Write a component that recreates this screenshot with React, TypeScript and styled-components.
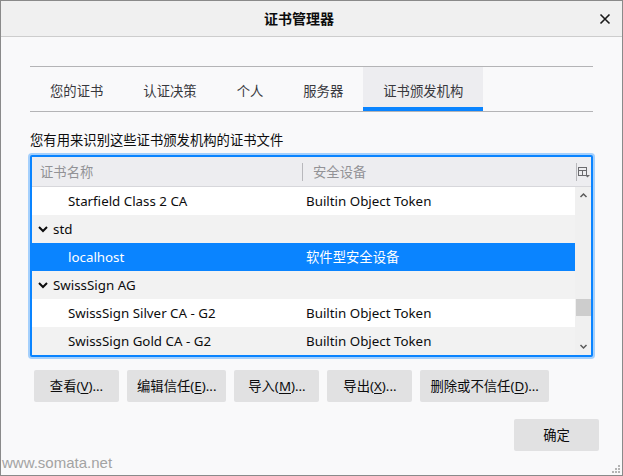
import React from "react";
import styled, { createGlobalStyle, css } from "styled-components";

const GlobalStyle = createGlobalStyle`
  html, body {
    margin: 0;
    padding: 0;
    background: #f9f9fa;
  }
  body {
    font-family: "Noto Sans", "Noto Sans CJK SC", sans-serif;
    font-size: 13.33px;
    color: #0c0c0d;
  }
  * {
    box-sizing: border-box;
  }
`;

const Window = styled.div`
  position: relative;
  width: 623px;
  height: 476px;
  border: 1px solid #8a8a8a;
  background: #f9f9fa;
  display: flex;
  flex-direction: column;
  overflow: hidden;
`;

const TitleBar = styled.div`
  flex: none;
  height: 36px;
  display: flex;
  align-items: center;
  background: #f0f0f0;
  border-bottom: 1px solid #cdcdcd;
`;

const Title = styled.div`
  flex: 1;
  padding-left: 8px;
  text-align: center;
  font-size: 14px;
  font-weight: 600;
  line-height: 20px;
  color: #0c0c0d;
`;

const CloseButton = styled.div`
  width: 32px;
  height: 35px;
  margin-right: 1px;
  display: flex;
  align-items: center;
  justify-content: center;
`;

const Content = styled.div`
  padding: 29px 29px 0 29px;
  display: flex;
  flex-direction: column;
`;

const TabStrip = styled.div`
  display: flex;
  height: 46px;
  border-top: 1px solid #b4b4b6;
  border-bottom: 1px solid #b4b4b6;
`;

const Tab = styled.div<{ $active?: boolean }>(
  (props) => css`
    height: 44px;
    padding: 3px 20px 0;
    display: flex;
    align-items: center;
    line-height: 20px;
    color: #38383d;
    ${props.$active &&
    css`
      background: #ededf0;
      box-shadow: inset 0 -4px 0 #0a84ff;
    `}
  `
);

const Caption = styled.div`
  margin-top: 18px;
  line-height: 20px;
`;

const ListBox = styled.div`
  margin-top: 5px;
  border: 2px solid #0a84ff;
  border-radius: 2px;
  box-shadow: 0 0 0 2px rgba(10, 132, 255, 0.35);
  background: #fff;
  display: flex;
  flex-direction: column;
`;

const Header = styled.div`
  height: 30px;
  display: flex;
  align-items: center;
  background: #ededf0;
  border-bottom: 1px solid #d7d7db;
  color: #929296;
`;

const HeaderCell = styled.div<{ $width?: number; $pad: number }>(
  (props) => css`
    ${props.$width ? `width: ${props.$width}px;` : "flex: 1;"}
    padding-left: ${props.$pad}px;
    line-height: 20px;
    white-space: nowrap;
  `
);

const Splitter = styled.span`
  width: 1px;
  height: 18px;
  background: #b8b8bc;
`;

const Picker = styled.div`
  width: 14px;
  display: flex;
  justify-content: center;
`;

const Body = styled.div`
  display: flex;
  height: 168px;
`;

const Rows = styled.div`
  flex: 1;
  display: flex;
  flex-direction: column;
`;

type RowKind = "plain" | "odd" | "selected";

const Row = styled.div<{ $kind: RowKind }>(
  (props) => css`
    height: 28px;
    display: flex;
    align-items: center;
    line-height: 20px;
    white-space: nowrap;
    background: ${props.$kind === "odd"
      ? "#f2f2f2"
      : props.$kind === "selected"
      ? "#0a84ff"
      : "#fff"};
    color: ${props.$kind === "selected" ? "#fff" : "#0c0c0d"};
  `
);

const NameCell = styled.div<{ $indent: number }>(
  (props) => css`
    width: 271px;
    padding-left: ${props.$indent}px;
    display: flex;
    align-items: center;
  `
);

const DeviceCell = styled.div`
  flex: 1;
  padding-left: 3px;
`;

const Twisty = styled.span`
  display: flex;
  margin-right: 4px;
`;

const Scrollbar = styled.div`
  width: 16px;
  background: #f0f0f0;
  display: flex;
  flex-direction: column;
`;

const ScrollArrow = styled.div`
  height: 17px;
  display: flex;
  align-items: center;
  justify-content: center;
`;

const Track = styled.div`
  flex: 1;
  padding-left: 1px;
`;

const Thumb = styled.div`
  height: 17px;
  background: #cdcdcd;
`;

const ButtonRow = styled.div`
  margin-top: 13px;
  padding-left: 4px;
  display: flex;
  gap: 8px;
`;

const Button = styled.button`
  height: 32px;
  min-width: 85px;
  padding: 0 10px;
  border: none;
  border-radius: 2px;
  background: #e1e1e2;
  color: #0c0c0d;
  font-family: inherit;
  font-size: 13.33px;
  line-height: 20px;
  white-space: nowrap;

  u {
    text-underline-offset: 2px;
  }
`;

const Footer = styled.div`
  padding: 17px 23px 0 0;
  display: flex;
  justify-content: flex-end;
`;

const Watermark = styled.div`
  position: absolute;
  left: 1px;
  top: 452px;
  font-family: "Liberation Sans", Arial, sans-serif;
  font-size: 15px;
  line-height: 20px;
  color: #a3a3a3;
`;

const Grip = styled.svg`
  position: absolute;
  right: 1px;
  bottom: 1px;
`;

interface Entry {
  name: string;
  device?: string;
  group?: boolean;
  selected?: boolean;
}

const entries: Entry[] = [
  { name: "Starfield Class 2 CA", device: "Builtin Object Token" },
  { name: "std", group: true },
  { name: "localhost", device: "软件型安全设备", selected: true },
  { name: "SwissSign AG", group: true },
  { name: "SwissSign Silver CA - G2", device: "Builtin Object Token" },
  { name: "SwissSign Gold CA - G2", device: "Builtin Object Token" },
];

const tabs = ["您的证书", "认证决策", "个人", "服务器", "证书颁发机构"];

const buttons: [string, string, string][] = [
  ["查看(", "V", ")..."],
  ["编辑信任(", "E", ")..."],
  ["导入(", "M", ")..."],
  ["导出(", "X", ")..."],
  ["删除或不信任(", "D", ")..."],
];

function CloseIcon() {
  return (
    <svg width="12" height="12" viewBox="0 0 12 12">
      <path
        d="M1.5 1.5 L10.5 10.5 M10.5 1.5 L1.5 10.5"
        stroke="#1a1a1a"
        strokeWidth="1.6"
        fill="none"
      />
    </svg>
  );
}

function ColumnPickerIcon() {
  return (
    <svg width="12" height="12" viewBox="0 0 12 12">
      <rect x="0.5" y="1.5" width="8" height="8" fill="none" stroke="#6a6a6e" />
      <path d="M0.5 4.5 H8.5 M4.5 4.5 V9.5" stroke="#6a6a6e" fill="none" />
      <path d="M7 9 H12 L9.5 11.5 Z" fill="#6a6a6e" />
    </svg>
  );
}

function Chevron(props: { up?: boolean; color: string; size: number; width: number }) {
  const { up, color, size, width } = props;
  const d = up ? "M2 8 L6 4 L10 8" : "M2 4 L6 8 L10 4";
  return (
    <svg width={size} height={size} viewBox="0 0 12 12">
      <path d={d} stroke={color} strokeWidth={width} fill="none" />
    </svg>
  );
}

export default function App() {
  const thumbOffset = 95;

  return (
    <>
      <GlobalStyle />
      <Window>
        <TitleBar>
          <Title>证书管理器</Title>
          <CloseButton>
            <CloseIcon />
          </CloseButton>
        </TitleBar>

        <Content>
          <TabStrip>
            {tabs.map((t, i) => (
              <Tab key={t} $active={i === tabs.length - 1}>
                {t}
              </Tab>
            ))}
          </TabStrip>

          <Caption>您有用来识别这些证书颁发机构的证书文件</Caption>

          <ListBox>
            <Header>
              <HeaderCell $width={270} $pad={8}>
                证书名称
              </HeaderCell>
              <Splitter />
              <HeaderCell $pad={10}>安全设备</HeaderCell>
              <Splitter />
              <Picker>
                <ColumnPickerIcon />
              </Picker>
            </Header>
            <Body>
              <Rows>
                {entries.map((e, i) => (
                  <Row
                    key={e.name}
                    $kind={e.selected ? "selected" : i % 2 === 1 ? "odd" : "plain"}
                  >
                    <NameCell $indent={e.group ? 5 : 36}>
                      {e.group && (
                        <Twisty>
                          <Chevron color="#0c0c0d" size={12} width={2} />
                        </Twisty>
                      )}
                      {e.name}
                    </NameCell>
                    <DeviceCell>{e.device}</DeviceCell>
                  </Row>
                ))}
              </Rows>
              <Scrollbar>
                <ScrollArrow>
                  <Chevron up color="#5a5a5a" size={9} width={2} />
                </ScrollArrow>
                <Track>
                  <Thumb style={{ marginTop: thumbOffset }} />
                </Track>
                <ScrollArrow>
                  <Chevron color="#5a5a5a" size={9} width={2} />
                </ScrollArrow>
              </Scrollbar>
            </Body>
          </ListBox>

          <ButtonRow>
            {buttons.map(([a, key, b]) => (
              <Button key={key}>
                {a}
                <u>{key}</u>
                {b}
              </Button>
            ))}
          </ButtonRow>
        </Content>

        <Footer>
          <Button>确定</Button>
        </Footer>

        <Watermark>www.somata.net</Watermark>
        <Grip width="10" height="10" viewBox="0 0 10 10">
          {[
            [8, 2],
            [5, 5],
            [8, 5],
            [2, 8],
            [5, 8],
            [8, 8],
          ].map(([x, y]) => (
            <rect key={`${x}-${y}`} x={x - 1} y={y - 1} width="2" height="2" fill="#b4b4b4" />
          ))}
        </Grip>
      </Window>
    </>
  );
}
